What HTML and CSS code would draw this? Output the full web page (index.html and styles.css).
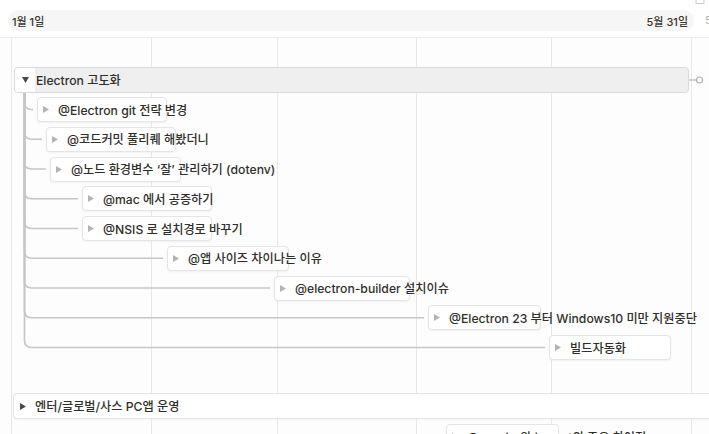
FILE: index.html
```html
<!DOCTYPE html>
<html lang="ko">
<head>
<meta charset="utf-8">
<title>Timeline</title>
<link rel="stylesheet" href="styles.css">
</head>
<body>
<div class="header">
  <div class="range"><span>1월 1일</span><span>5월 31일</span></div>
  <span class="next">5</span>
  <svg class="corner" width="10" height="5" viewBox="0 0 10 5"><path d="M1 0 V3.5 H9 V0" fill="none" stroke="#c9c9c9" stroke-width="1"/></svg>
</div>
<div class="canvas">
  <div class="grid"><div></div><div></div><div></div><div></div><div></div><div></div><div></div></div>
  <svg class="links" width="709" height="395" viewBox="0 0 709 395">
    <g fill="none" stroke="#c6c6c6" stroke-width="1.7">
      <path d="M24.5 55 V64.5 Q24.5 71.5 31.5 71.5 H33"/>
      <path d="M24.5 55 V94.25 Q24.5 101.25 31.5 101.25 H42"/>
      <path d="M24.5 55 V124 Q24.5 131 31.5 131 H46"/>
      <path d="M24.5 55 V153.75 Q24.5 160.75 31.5 160.75 H78"/>
      <path d="M24.5 55 V183.5 Q24.5 190.5 31.5 190.5 H78"/>
      <path d="M24.5 55 V213.25 Q24.5 220.25 31.5 220.25 H163"/>
      <path d="M24.5 55 V243 Q24.5 250 31.5 250 H270"/>
      <path d="M24.5 55 V272.75 Q24.5 279.75 31.5 279.75 H424"/>
      <path d="M24.5 55 V302.5 Q24.5 309.5 31.5 309.5 H545"/>
    </g>
    <path d="M689 42 H696.5" stroke="#b5b5b5" stroke-width="1.2"/>
    <circle cx="699.5" cy="42" r="3" fill="#fff" stroke="#b0b0b0" stroke-width="1.2"/>
  </svg>
  <div class="rows">
    <div class="row parent-row">
      <div class="parent" style="margin-left:14px;width:675px">
        <span class="toggle"><svg width="7" height="6" viewBox="0 0 7 6"><path d="M0 0 H7 L3.5 6 Z" fill="#4a4a4a"/></svg></span>
        <span class="label">Electron 고도화</span>
      </div>
    </div>
    <div class="row"><div class="card" style="margin-left:37px;width:130px"><svg class="tri" width="6" height="7" viewBox="0 0 6 7"><path d="M0 0 L6 3.5 L0 7 Z"/></svg><span>@Electron git 전략 변경</span></div></div>
    <div class="row"><div class="card" style="margin-left:46px;width:130px"><svg class="tri" width="6" height="7" viewBox="0 0 6 7"><path d="M0 0 L6 3.5 L0 7 Z"/></svg><span>@코드커밋 풀리퀘 해봤더니</span></div></div>
    <div class="row"><div class="card" style="margin-left:50px;width:131px"><svg class="tri" width="6" height="7" viewBox="0 0 6 7"><path d="M0 0 L6 3.5 L0 7 Z"/></svg><span>@노드 환경변수 ‘잘’ 관리하기 (dotenv)</span></div></div>
    <div class="row"><div class="card" style="margin-left:82px;width:130px"><svg class="tri" width="6" height="7" viewBox="0 0 6 7"><path d="M0 0 L6 3.5 L0 7 Z"/></svg><span>@mac 에서 공증하기</span></div></div>
    <div class="row"><div class="card" style="margin-left:82px;width:130px"><svg class="tri" width="6" height="7" viewBox="0 0 6 7"><path d="M0 0 L6 3.5 L0 7 Z"/></svg><span>@NSIS 로 설치경로 바꾸기</span></div></div>
    <div class="row"><div class="card" style="margin-left:167px;width:122px"><svg class="tri" width="6" height="7" viewBox="0 0 6 7"><path d="M0 0 L6 3.5 L0 7 Z"/></svg><span>@앱 사이즈 차이나는 이유</span></div></div>
    <div class="row"><div class="card" style="margin-left:274px;width:136px"><svg class="tri" width="6" height="7" viewBox="0 0 6 7"><path d="M0 0 L6 3.5 L0 7 Z"/></svg><span>@electron-builder 설치이슈</span></div></div>
    <div class="row"><div class="card" style="margin-left:428px;width:113px"><svg class="tri" width="6" height="7" viewBox="0 0 6 7"><path d="M0 0 L6 3.5 L0 7 Z"/></svg><span>@Electron 23 부터 Windows10 미만 지원중단</span></div></div>
    <div class="row"><div class="card" style="margin-left:549px;width:122px"><svg class="tri" width="6" height="7" viewBox="0 0 6 7"><path d="M0 0 L6 3.5 L0 7 Z"/></svg><span>빌드자동화</span></div></div>
    <div class="group">
      <svg class="gtri" width="6" height="7" viewBox="0 0 6 7"><path d="M0 0 L6 3.5 L0 7 Z"/></svg>
      <span>엔터/글로벌/사스 PC앱 운영</span>
    </div>
    <div class="row last"><div class="card" style="margin-left:446px;width:113px"><svg class="tri" width="6" height="7" viewBox="0 0 6 7"><path d="M0 0 L6 3.5 L0 7 Z"/></svg><span>@require와 import의 주요 차이점</span></div></div>
  </div>
</div>
</body>
</html>
```

FILE: styles.css
```css
html, body {
  margin: 0;
  padding: 0;
}
body {
  width: 709px;
  height: 434px;
  overflow: hidden;
  background: #ffffff;
  font-family: "Inter", "Noto Sans CJK KR", sans-serif;
  color: #2f2e2b;
}
.header {
  position: relative;
  height: 38px;
  box-sizing: border-box;
  display: flex;
  align-items: flex-start;
  padding: 10px 0 0 8px;
  border-bottom: 1px solid #ececec;
  white-space: nowrap;
  overflow: hidden;
}
.range {
  flex: none;
  width: 686px;
  height: 21px;
  box-sizing: border-box;
  border-radius: 11px;
  background: #f6f6f6;
  display: flex;
  justify-content: space-between;
  align-items: center;
  padding: 0 6px 0 4px;
  font-size: 11px;
  font-weight: 500;
  color: #37352f;
}
.next {
  flex: none;
  margin-left: 11px;
  line-height: 21px;
  font-size: 11px;
  color: #b5b5b5;
}
.corner {
  position: absolute;
  top: 0;
  right: 4px;
}
.canvas {
  position: relative;
  height: 396px;
  background: #fdfdfd;
}
.grid {
  position: absolute;
  inset: 0;
  display: grid;
  grid-template-columns: 11px 140px 126px 139px 135px 140px 1fr;
}
.grid > div + div {
  border-left: 1px solid #e8e8e8;
}
.links {
  position: absolute;
  left: 0;
  top: 0;
}
.rows {
  position: relative;
  z-index: 1;
  padding-top: 29px;
}
.row {
  height: 29.75px;
  white-space: nowrap;
}
.parent-row {
  height: 30px;
}
.parent {
  height: 26px;
  box-sizing: border-box;
  display: flex;
  align-items: center;
  background: #efefef;
  border: 1px solid #d9d9d9;
  border-radius: 4px;
  font-size: 12.2px;
  font-weight: 500;
  overflow: hidden;
}
.toggle {
  align-self: stretch;
  width: 20px;
  background: #ffffff;
  display: flex;
  align-items: center;
  justify-content: center;
  margin-right: 1px;
}
.card {
  height: 25px;
  box-sizing: border-box;
  display: flex;
  align-items: center;
  padding-left: 5px;
  background: #ffffff;
  border: 1px solid #e5e5e5;
  border-radius: 4px;
  box-shadow: 0 1px 2px rgba(0, 0, 0, 0.05);
  font-size: 12.2px;
  font-weight: 500;
  white-space: nowrap;
}
.tri {
  flex: none;
  margin-right: 9px;
  fill: #b3b3b3;
}
.group {
  margin: 28.25px 0 0 13px;
  width: 720px;
  height: 26px;
  box-sizing: border-box;
  display: flex;
  align-items: center;
  padding-left: 6px;
  background: #ffffff;
  border: 1px solid #e5e5e5;
  border-radius: 4px;
  box-shadow: 0 1px 2px rgba(0, 0, 0, 0.04);
  font-size: 12.2px;
  font-weight: 500;
  white-space: nowrap;
}
.gtri {
  flex: none;
  margin-right: 9px;
  fill: #4a4a4a;
}
.last {
  margin-top: 5px;
}
```
